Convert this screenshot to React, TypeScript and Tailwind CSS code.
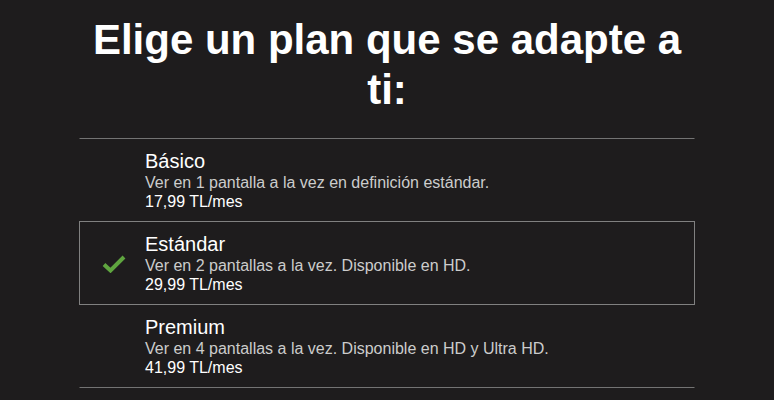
import { useState } from 'react'

type Plan = {
  id: string
  name: string
  desc: string
  price: string
}

const plans: Plan[] = [
  { id: 'basic', name: 'Básico', desc: 'Ver en 1 pantalla a la vez en definición estándar.', price: '17,99 TL/mes' },
  { id: 'standard', name: 'Estándar', desc: 'Ver en 2 pantallas a la vez. Disponible en HD.', price: '29,99 TL/mes' },
  { id: 'premium', name: 'Premium', desc: 'Ver en 4 pantallas a la vez. Disponible en HD y Ultra HD.', price: '41,99 TL/mes' },
]

function Check() {
  return (
    <svg width="24" height="18" viewBox="0 0 24 18" fill="none">
      <path d="M2 9.5 L8.5 15.5 L22 2" stroke="#5fa53f" strokeWidth="4" strokeLinejoin="miter" />
    </svg>
  )
}

export default function App() {
  const [selected, setSelected] = useState('standard')

  return (
    <div
      className="min-h-screen bg-[#1e1c1d] text-white"
      style={{ fontFamily: '"Liberation Sans", Arial, sans-serif' }}
    >
      <div className="w-[616px] mx-auto pt-[15px]">
        <h1 className="text-[42px] leading-[50px] font-bold text-center px-2 mb-[23px]">
          Elige un plan que se adapte a ti:
        </h1>

        <ul className="flex flex-col">
          {plans.map((plan, i) => {
            const active = plan.id === selected
            return (
              <li
                key={plan.id}
                onClick={() => setSelected(plan.id)}
                className={`flex items-center h-[84px] border cursor-pointer ${i > 0 ? '-mt-px' : ''} ${
                  active ? 'border-[#808080] relative' : 'border-x-transparent border-y-[#737373]'
                }`}
              >
                <div className="w-[65px] flex justify-center pl-[3px] pt-[2px]">
                  {active && <Check />}
                </div>
                <div className="flex flex-col">
                  <span className="text-[20px] leading-[23px]">{plan.name}</span>
                  <span className="text-[16px] leading-[19px] text-[#cccccc]">{plan.desc}</span>
                  <span className="text-[16px] leading-[19px]">{plan.price}</span>
                </div>
              </li>
            )
          })}
        </ul>
      </div>
    </div>
  )
}
